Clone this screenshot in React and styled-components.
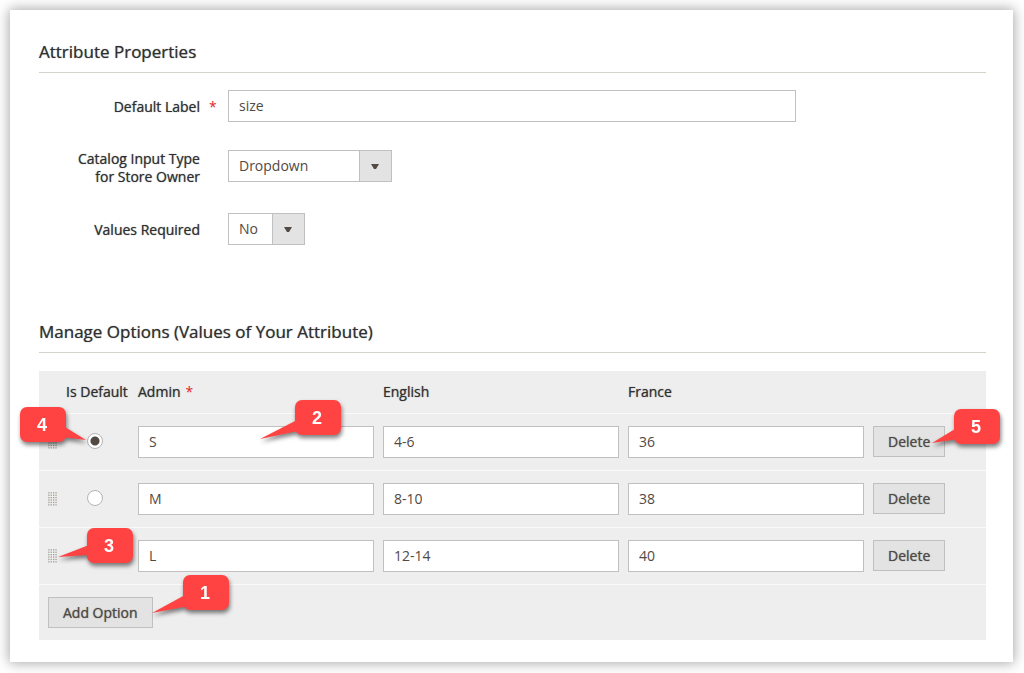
import React, { useState } from 'react'
import styled, { createGlobalStyle, css } from 'styled-components'

const GlobalStyle = createGlobalStyle`
  *, *::before, *::after {
    box-sizing: border-box;
  }

  body {
    margin: 0;
    background: #fff;
    color: #303030;
    font-family: 'Open Sans', 'Liberation Sans', sans-serif;
    font-size: 14px;
  }
`

const initialOptions = [
  { id: 1, admin: 'S', english: '4-6', france: '36' },
  { id: 2, admin: 'M', english: '8-10', france: '38' },
  { id: 3, admin: 'L', english: '12-14', france: '40' },
]

const stores = [
  { key: 'admin', title: 'Admin', required: true },
  { key: 'english', title: 'English' },
  { key: 'france', title: 'France' },
]

const tails = {
  right: { x: 41, y: 19, w: 26, h: 15, d: 'M0 11 L4 1 L25 14 Z' },
  farLeft: { x: -35, y: 19, w: 43, h: 21, d: 'M0 20 L37 1 L43 11 Z' },
  left: { x: -30, y: 16, w: 36, h: 15, d: 'M1 13 L32 1 L32 11 Z' },
  downLeft: { x: -32, y: 19, w: 40, h: 20, d: 'M1 19 L34 1 L38 12 Z' },
  shortLeft: { x: -23, y: 19, w: 29, h: 17, d: 'M1 15 L24 1 L28 11 Z' },
}

function Callout({ number, tail, top, left }) {
  const { x, y, w, h, d } = tails[tail]
  return (
    <Bubble $top={top} $left={left}>
      <Tail $x={x} $y={y} width={w} height={h} viewBox={`0 0 ${w} ${h}`} aria-hidden="true">
        <path d={d} fill="#ff4343" />
      </Tail>
      <Digit>{number}</Digit>
    </Bubble>
  )
}

function DragIcon() {
  const dots = []
  for (let row = 0; row < 6; row++) {
    for (let col = 0; col < 4; col++) {
      dots.push(<rect key={`${row}-${col}`} x={0.2 + col * 2.4} y={0.2 + row * 2.4} width="1.3" height="1.3" />)
    }
  }
  return (
    <svg width="9" height="14" viewBox="0 0 9 14" fill="#a39e96" aria-hidden="true">
      {dots}
    </svg>
  )
}

function Dropdown({ id, width, value, options, onChange }) {
  return (
    <SelectWrap $width={width}>
      <Select id={id} value={value} onChange={(e) => onChange(e.target.value)}>
        {options.map((option) => <option key={option}>{option}</option>)}
      </Select>
      <Arrow aria-hidden="true">
        <svg width="8" height="5" viewBox="0 0 8 5"><path d="M0 0h8L5 5H3z" fill="#514943" /></svg>
      </Arrow>
    </SelectWrap>
  )
}

function App() {
  const [label, setLabel] = useState('size')
  const [inputType, setInputType] = useState('Dropdown')
  const [required, setRequired] = useState('No')
  const [options, setOptions] = useState(initialOptions)
  const [defaultId, setDefaultId] = useState(1)

  const updateOption = (id, key, value) => {
    setOptions(options.map((o) => (o.id === id ? { ...o, [key]: value } : o)))
  }

  const addOption = () => {
    setOptions([...options, { id: Date.now(), admin: '', english: '', france: '' }])
  }

  return (
    <>
      <GlobalStyle />
      <Panel>
        <Title>Attribute Properties</Title>
        <Fields>
          <Field>
            <Label htmlFor="label">Default Label<LabelMark>*</LabelMark></Label>
            <TextInput id="label" value={label} onChange={(e) => setLabel(e.target.value)} />
          </Field>
          <Field>
            <Label htmlFor="input-type">Catalog Input Type<br />for Store Owner</Label>
            <Dropdown id="input-type" width={164} value={inputType} onChange={setInputType}
              options={['Dropdown', 'Text Field', 'Text Area', 'Date', 'Yes/No']} />
          </Field>
          <Field>
            <Label htmlFor="required">Values Required</Label>
            <Dropdown id="required" width={77} value={required} onChange={setRequired} options={['No', 'Yes']} />
          </Field>
        </Fields>

        <Title>Manage Options (Values of Your Attribute)</Title>
        <Table>
          <colgroup>
            <Col $width={27} />
            <Col $width={67} />
            <col />
            <col />
            <col />
            <Col $width={118} />
          </colgroup>
          <thead>
            <tr>
              <Th />
              <Th $flush>Is Default</Th>
              {stores.map((store) => (
                <Th key={store.key}>{store.title}{store.required && <Mark>*</Mark>}</Th>
              ))}
              <Th />
            </tr>
          </thead>
          <tbody>
            {options.map((option, i) => (
              <tr key={option.id}>
                <HandleCell>
                  <DragIcon />
                  {i === 0 && <Callout number="4" tail="right" top={-7} left={-19} />}
                  {i === 2 && <Callout number="3" tail="left" top={0} left={48} />}
                </HandleCell>
                <RadioCell>
                  <Radio type="radio" name="default" aria-label={`Default ${option.admin}`}
                    checked={defaultId === option.id} onChange={() => setDefaultId(option.id)} />
                </RadioCell>
                {stores.map((store) => (
                  <Td key={store.key}>
                    <TextInput aria-label={store.title} value={option[store.key]}
                      onChange={(e) => updateOption(option.id, store.key, e.target.value)} />
                    {i === 0 && store.key === 'admin' && <Callout number="2" tail="farLeft" top={-14} left={162} />}
                  </Td>
                ))}
                <Td>
                  <Button type="button" onClick={() => setOptions(options.filter((o) => o.id !== option.id))}>
                    Delete
                  </Button>
                  {i === 0 && <Callout number="5" tail="shortLeft" top={-5} left={86} />}
                </Td>
              </tr>
            ))}
          </tbody>
          <tfoot>
            <tr>
              <FootCell colSpan={6}>
                <Button type="button" onClick={addOption}>Add Option</Button>
                <Callout number="1" tail="downLeft" top={-10} left={144} />
              </FootCell>
            </tr>
          </tfoot>
        </Table>
      </Panel>
    </>
  )
}

// regular cut, thickened a little
const strong = css`
  font-weight: 400;
  text-shadow: 0 0 1px rgba(48, 48, 48, 0.7);
`

const Panel = styled.main`
  margin: 10px 11px 11px 10px;
  padding: 27px 27px 22px 29px;
  background: #fff;
  box-shadow: 0 0 12px 1px rgba(0, 0, 0, 0.35);
`

const Title = styled.h2`
  ${strong}
  margin: 0;
  padding-bottom: 5px;
  border-bottom: 1px solid #d6d3cb;
  font-size: 17px;
  line-height: 30px;
`

const Fields = styled.div`
  display: grid;
  gap: 27px;
  padding: 17px 0 71px;
`

const Field = styled.div`
  display: grid;
  grid-template-columns: 17% 60%;
  column-gap: 28px;
  align-items: start;
`

const Label = styled.label`
  ${strong}
  position: relative;
  display: flex;
  align-items: center;
  justify-content: flex-end;
  min-height: 33px;
  line-height: 18px;
  text-align: right;
`

const Mark = styled.span`
  margin-left: 5px;
  color: #e22626;
  text-shadow: none;
`

const LabelMark = styled.span`
  position: absolute;
  left: 100%;
  margin-left: 9px;
  color: #e22626;
  text-shadow: none;
`

const TextInput = styled.input`
  display: block;
  width: 100%;
  height: 32px;
  padding: 0 10px 2px;
  border: 1px solid #c0c0c0;
  border-radius: 0;
  background: #fff;
  color: #514943;
  font: inherit;
`

const SelectWrap = styled.div`
  position: relative;
  width: ${({ $width }) => $width}px;
`

const Select = styled.select`
  display: block;
  width: 100%;
  height: 32px;
  padding: 0 34px 2px 10px;
  border: 1px solid #c0c0c0;
  border-radius: 0;
  appearance: none;
  background: #fff;
  color: #514943;
  font: inherit;
`

const Arrow = styled.span`
  position: absolute;
  top: 0;
  right: 0;
  display: flex;
  align-items: center;
  justify-content: center;
  width: 33px;
  height: 100%;
  border: 1px solid #c0c0c0;
  background: #e3e3e3;
  pointer-events: none;
`

const Table = styled.table`
  width: 100%;
  margin-top: 18px;
  border-spacing: 0;
  table-layout: fixed;
  background: #eee;
`

const Col = styled.col`
  width: ${({ $width }) => $width}px;
`

const Th = styled.th`
  ${strong}
  height: 43px;
  padding: ${({ $flush }) => ($flush ? '0 0 2px' : '0 4px 2px 5px')};
  border-bottom: 1px solid #fafafa;
  text-align: left;
  white-space: nowrap;
`

const Td = styled.td`
  position: relative;
  padding: 12px 4px 12px 5px;
  border-bottom: 1px solid #fafafa;
  vertical-align: top;
`

const HandleCell = styled(Td)`
  padding-left: 9px;
  line-height: 0;
  vertical-align: middle;
`

const RadioCell = styled(Td)`
  padding: 0 0 2px 21px;
  vertical-align: middle;
`

const FootCell = styled.td`
  position: relative;
  padding: 12px 9px;
`

const Radio = styled.input`
  display: block;
  width: 16px;
  height: 16px;
  margin: 0;
  border: 1px solid #b4b4b4;
  border-radius: 50%;
  appearance: none;
  background: #fff;

  &:checked {
    background: radial-gradient(circle, #514943 4px, #fff 5px);
  }
`

const Button = styled.button`
  display: block;
  height: 31px;
  padding: 0 14px;
  border: 1px solid #c0c0c0;
  background: #e3e3e3;
  color: #514943;
  font: inherit;
  ${strong}
  cursor: pointer;
`

const Bubble = styled.span`
  position: absolute;
  z-index: 1;
  top: ${({ $top }) => $top}px;
  left: ${({ $left }) => $left}px;
  display: flex;
  align-items: center;
  justify-content: center;
  width: 46px;
  height: 35px;
  padding-right: 2px;
  border-radius: 7px;
  background: #ff4343;
  color: #fff;
  font: bold 18px/1 'Liberation Sans', Arial, sans-serif;
  filter: drop-shadow(1px 3px 2px rgba(0, 0, 0, 0.5));
`

const Tail = styled.svg`
  position: absolute;
  top: ${({ $y }) => $y}px;
  left: ${({ $x }) => $x}px;
`

const Digit = styled.span`
  position: relative;
`

export default App
